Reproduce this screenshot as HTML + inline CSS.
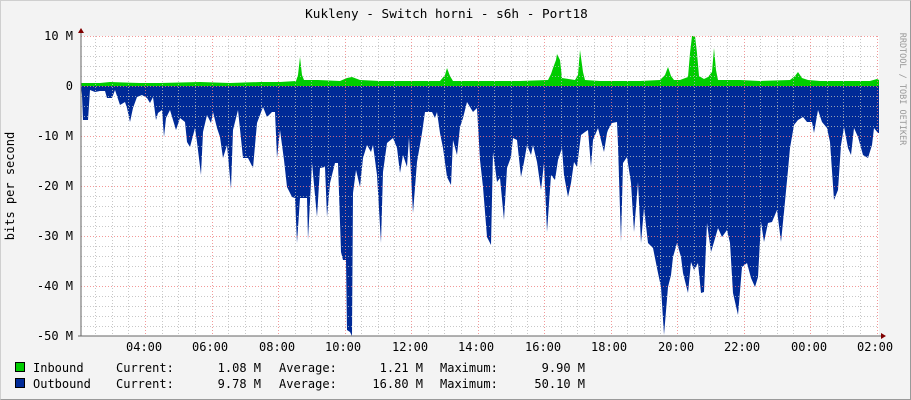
<!DOCTYPE html>
<html><head><meta charset="utf-8"><style>
html,body{margin:0;padding:0}
body{width:911px;height:400px;background:#f3f3f3;position:relative;overflow:hidden;font-family:"DejaVu Sans Mono","Liberation Mono",monospace;font-size:12px;color:#000}
.frame{position:absolute;left:0;top:0;width:909px;height:398px;border:1px solid #cfcfcf;border-right-color:#9a9a9a;border-bottom-color:#9a9a9a}
.t{position:absolute;white-space:pre;line-height:14px}
.r{text-align:right}
.sq{position:absolute;width:8px;height:8px;border:1px solid #000}
</style></head><body>
<div class="frame"></div>
<div class="t" style="left:-9px;width:911px;text-align:center;top:7px;font-size:12.7px">Kukleny - Switch horni - s6h - Port18</div>
<div class="t" style="left:-45px;top:179px;width:110px;text-align:center;transform:rotate(-90deg)">bits per second</div>
<div class="t" style="left:842px;top:82px;width:120px;font-size:8.5px;color:#999;transform:rotate(90deg);text-align:center">RRDTOOL / TOBI OETIKER</div>
<div class="t r" style="left:0;width:73px;top:29px">10 M</div>
<div class="t r" style="left:0;width:73px;top:79px">0</div>
<div class="t r" style="left:0;width:73px;top:129px">-10 M</div>
<div class="t r" style="left:0;width:73px;top:179px">-20 M</div>
<div class="t r" style="left:0;width:73px;top:229px">-30 M</div>
<div class="t r" style="left:0;width:73px;top:279px">-40 M</div>
<div class="t r" style="left:0;width:73px;top:329px">-50 M</div>
<div class="t" style="left:126px;top:340px">04:00</div>
<div class="t" style="left:192px;top:340px">06:00</div>
<div class="t" style="left:259px;top:340px">08:00</div>
<div class="t" style="left:325px;top:340px">10:00</div>
<div class="t" style="left:392px;top:340px">12:00</div>
<div class="t" style="left:458px;top:340px">14:00</div>
<div class="t" style="left:525px;top:340px">16:00</div>
<div class="t" style="left:591px;top:340px">18:00</div>
<div class="t" style="left:658px;top:340px">20:00</div>
<div class="t" style="left:724px;top:340px">22:00</div>
<div class="t" style="left:791px;top:340px">00:00</div>
<div class="t" style="left:857px;top:340px">02:00</div>
<svg width="911" height="400" style="position:absolute;left:0;top:0">
<rect x="81" y="36" width="798" height="300" fill="#fff"/>
<polygon fill="#00cc00" points="81,86 81,83 100,83 110,82 140,83 160,83 200,82 230,83 260,82 280,82 296,81 298,75 300,57 302,75 304,80 318,80 340,81 347,78 352,77 360,80 380,81 420,81 440,81 445,75 447,68 450,76 453,81 480,81 500,81 520,81 548,80 551,74 553,68 556,60 557,54 560,60 562,78 575,80 578,75 580,50 583,72 585,80 600,81 620,81 640,81 660,80 665,75 668,67 671,76 674,80 680,80 688,77 690,53 692,36 695,36 697,53 699,76 704,79 708,77 712,72 714,48 716,70 718,80 740,80 760,81 790,80 795,76 798,72 802,78 808,80 820,81 850,81 870,81 877,79 879,80 879,86"/>
<polygon fill="#002a97" points="81,86 82,95 83,120 88,120 90,90 95,92 100,91 105,91 107,98 112,98 115,90 120,105 125,102 127,108 130,122 133,108 137,97 142,95 147,98 150,103 153,97 156,120 158,113 162,110 164,137 166,118 170,110 176,130 180,118 185,122 187,142 190,147 195,128 197,142 201,175 203,132 207,115 211,123 213,112 217,128 220,137 223,158 227,145 231,189 233,130 238,110 243,158 248,158 253,168 257,123 263,107 267,117 272,112 275,112 277,158 280,130 284,160 287,187 292,197 295,198 297,243 300,198 307,198 308,240 312,163 317,217 320,168 325,167 327,217 330,183 335,163 338,163 341,252 343,260 346,260 347,330 350,332 352,336 353,193 356,170 360,187 363,158 367,145 371,152 373,145 377,175 381,243 383,172 387,143 393,138 397,148 400,173 403,155 407,167 409,137 413,213 417,162 422,133 425,112 432,112 435,118 437,112 440,133 443,148 447,177 451,185 453,140 457,155 460,127 463,118 467,102 470,107 473,112 477,108 480,160 483,187 487,237 491,245 493,152 497,182 500,178 504,220 507,168 511,157 513,138 517,140 521,177 524,162 527,145 531,155 533,145 537,162 541,190 544,163 547,232 551,175 555,180 558,160 562,148 564,175 568,197 571,183 574,162 577,167 581,135 585,132 588,130 591,167 593,140 598,128 604,152 607,133 608,130 612,123 617,122 618,145 621,242 623,163 627,157 631,183 634,232 638,182 641,243 644,208 648,243 653,248 658,273 661,287 664,335 668,287 671,275 673,257 677,243 681,257 683,273 688,293 691,262 694,270 698,263 701,293 704,292 707,223 711,252 714,242 718,228 722,237 727,230 730,243 733,293 738,315 742,267 747,263 751,278 755,287 758,277 761,222 764,242 768,223 772,222 777,210 781,242 784,212 788,170 790,148 794,125 798,120 803,117 807,122 812,122 814,133 818,110 822,122 827,128 830,142 834,200 838,190 841,145 844,127 848,148 851,155 854,128 858,137 863,155 868,158 872,145 874,128 878,133 879,133 879,86"/>
<g id="grid"></g>
<path d="M81 336V30M78 336H884" stroke="#666" stroke-width="1" fill="none" shape-rendering="crispEdges"/>
<polygon points="78,33 84,33 81,28" fill="#800000"/>
<polygon points="881,333 881,339 886,336" fill="#800000"/>
</svg>
<script>
var g=document.getElementById('grid'),s='';
for(var y=46;y<336;y+=10){if((y-36)%50)s+='<line x1="81" x2="879" y1="'+(y+.5)+'" y2="'+(y+.5)+'" stroke="#bbb" stroke-width="1" stroke-dasharray="1 2" opacity="0.8"/>';}
for(var i=0;i<49;i++){var x=Math.round(145-4*16.625+i*16.625);if(x<=81||x>880)continue;var maj=((i)%4==0);if(!maj)s+='<line y1="36" y2="336" x1="'+(x+.5)+'" x2="'+(x+.5)+'" stroke="#bbb" stroke-width="1" stroke-dasharray="1 2" opacity="0.8"/>';}
for(var y=36;y<=286;y+=50)s+='<line x1="81" x2="879" y1="'+(y+.5)+'" y2="'+(y+.5)+'" stroke="#f08080" stroke-width="1" stroke-dasharray="1 2" opacity="0.8"/>';
for(var k=0;k<13;k++){var x=Math.round(145-66.5+k*66.5);if(x<=81||x>880)continue;s+='<line y1="36" y2="336" x1="'+(x+.5)+'" x2="'+(x+.5)+'" stroke="#f08080" stroke-width="1" stroke-dasharray="1 2" opacity="0.8"/>';}
g.innerHTML=s;
</script>
<div class="sq" style="left:15px;top:362px;background:#00cc00"></div>
<div class="sq" style="left:15px;top:378px;background:#002a97"></div>
<div class="t" style="left:33px;top:361px">Inbound</div>
<div class="t" style="left:116px;top:361px">Current:</div>
<div class="t r" style="left:150px;width:111px;top:361px">1.08 M</div>
<div class="t" style="left:279px;top:361px">Average:</div>
<div class="t r" style="left:300px;width:123px;top:361px">1.21 M</div>
<div class="t" style="left:440px;top:361px">Maximum:</div>
<div class="t r" style="left:480px;width:105px;top:361px">9.90 M</div>
<div class="t" style="left:33px;top:377px">Outbound</div>
<div class="t" style="left:116px;top:377px">Current:</div>
<div class="t r" style="left:150px;width:111px;top:377px">9.78 M</div>
<div class="t" style="left:279px;top:377px">Average:</div>
<div class="t r" style="left:300px;width:123px;top:377px">16.80 M</div>
<div class="t" style="left:440px;top:377px">Maximum:</div>
<div class="t r" style="left:480px;width:105px;top:377px">50.10 M</div>
</body></html>
